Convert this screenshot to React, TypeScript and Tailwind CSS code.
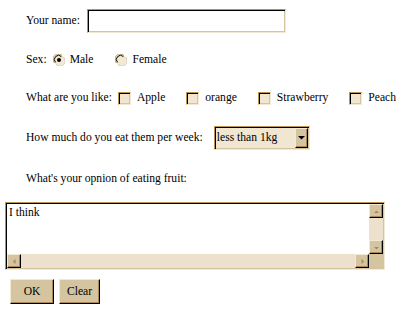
import React from "react"

// Classic beige Windows form look
const inset = "border border-t-[#b8944c] border-l-[#b8944c] border-b-[#f2e8d6] border-r-[#f2e8d6] shadow-[inset_1px_1px_#000,inset_-1px_-1px_#d4c4a0]"
const raised = "border border-t-[#f2e8d6] border-l-[#f2e8d6] border-b-black border-r-black shadow-[inset_-1px_-1px_#a8875a]"

function Radio({ checked }: { checked?: boolean }) {
  return (
    <svg width="12" height="12" viewBox="0 0 12 12" className="shrink-0">
      <circle cx="6" cy="6" r="5.5" fill="#f2e8d6" />
      <path d="M1.5 9 A5 5 0 0 1 9 1.5" stroke="#b8944c" strokeWidth="1" fill="none" />
      <path d="M2.6 8.4 A4 4 0 0 1 8.4 2.6" stroke="#000" strokeWidth="1" fill="none" />
      <path d="M3 10.5 A5 5 0 0 0 10.5 3" stroke="#d4c4a0" strokeWidth="1" fill="none" />
      {checked && <circle cx="6" cy="6" r="2" fill="#000" />}
    </svg>
  )
}

function Checkbox() {
  return <span className={`inline-block w-[13px] h-[13px] shrink-0 bg-[#f0e6d2] ${inset}`} />
}

function ScrollBtn({ dir }: { dir: "up" | "down" | "left" | "right" }) {
  const tri = {
    up: "M2 6 L4.5 3.5 L7 6 Z",
    down: "M2 4 L4.5 6.5 L7 4 Z",
    left: "M5.5 2 L3 4.5 L5.5 7 Z",
    right: "M3.5 2 L6 4.5 L3.5 7 Z",
  }[dir]
  return (
    <div className={`w-[14px] h-[14px] bg-[#d4c4a0] flex items-center justify-center ${raised}`}>
      <svg width="9" height="9" viewBox="0 0 9 9">
        <path d={tri} fill="#a8875a" />
      </svg>
    </div>
  )
}

export default function App() {
  return (
    <div className="w-[420px] h-[313px] bg-white text-black font-['Liberation_Serif',serif] text-[11.6px] leading-[14px] overflow-hidden">
      {/* Name */}
      <div className="flex items-center h-[24px] mt-[9px] pl-[26px]">
        <span>Your name:</span>
        <div className={`ml-[7px] w-[199px] h-[24px] bg-white ${inset}`} />
      </div>

      {/* Sex */}
      <div className="flex items-center h-[24px] mt-[15px] pl-[26px]">
        <span>Sex:</span>
        <span className="ml-[6px]"><Radio checked /></span>
        <span className="ml-[5px]">Male</span>
        <span className="ml-[22px]"><Radio /></span>
        <span className="ml-[5px]">Female</span>
      </div>

      {/* Fruits */}
      <div className="flex items-center h-[24px] mt-[14px] pl-[26px]">
        <span>What are you like:</span>
        <span className="ml-[6px] flex"><Checkbox /></span>
        <span className="ml-[6px]">Apple</span>
        <span className="ml-[21px] flex"><Checkbox /></span>
        <span className="ml-[6px]">orange</span>
        <span className="ml-[21px] flex"><Checkbox /></span>
        <span className="ml-[6px]">Strawberry</span>
        <span className="ml-[21px] flex"><Checkbox /></span>
        <span className="ml-[6px]">Peach</span>
      </div>

      {/* Amount */}
      <div className="flex items-center h-[24px] mt-[16px] pl-[26px]">
        <span>How much do you eat them per week:</span>
        <div className={`ml-[11px] w-[96px] h-[24px] bg-[#f0e6d2] flex items-center justify-between pl-[2px] pr-[1px] ${inset}`}>
          <span>less than 1kg</span>
          <div className={`w-[13px] h-[20px] bg-[#d4c4a0] flex items-center justify-center ${raised}`}>
            <svg width="7" height="4" viewBox="0 0 7 4">
              <path d="M0 0 H7 L3.5 3.5 Z" fill="#000" />
            </svg>
          </div>
        </div>
      </div>

      {/* Opinion */}
      <div className="flex items-center h-[24px] mt-[17px] pl-[26px]">
        <span>What's your opnion of eating fruit:</span>
      </div>

      <div className={`ml-[5px] mt-[11px] w-[380px] h-[68px] bg-white flex flex-col ${inset} p-[1px]`}>
        <div className="flex flex-1">
          <div className="flex-1 pl-[2px] pt-[2px]">I think</div>
          <div className="w-[14px] flex flex-col justify-between bg-[#ede0cc]">
            <ScrollBtn dir="up" />
            <ScrollBtn dir="down" />
          </div>
        </div>
        <div className="flex h-[14px]">
          <div className="flex-1 flex justify-between bg-[#ede0cc]">
            <ScrollBtn dir="left" />
            <ScrollBtn dir="right" />
          </div>
          <div className="w-[14px] bg-[#d4c4a0]" />
        </div>
      </div>

      {/* Buttons */}
      <div className="flex gap-[5px] ml-[10px] mt-[9px]">
        <button className={`w-[44px] h-[25px] bg-[#d4c4a0] ${raised}`}>OK</button>
        <button className={`w-[41px] h-[25px] bg-[#d4c4a0] ${raised}`}>Clear</button>
      </div>
    </div>
  )
}
